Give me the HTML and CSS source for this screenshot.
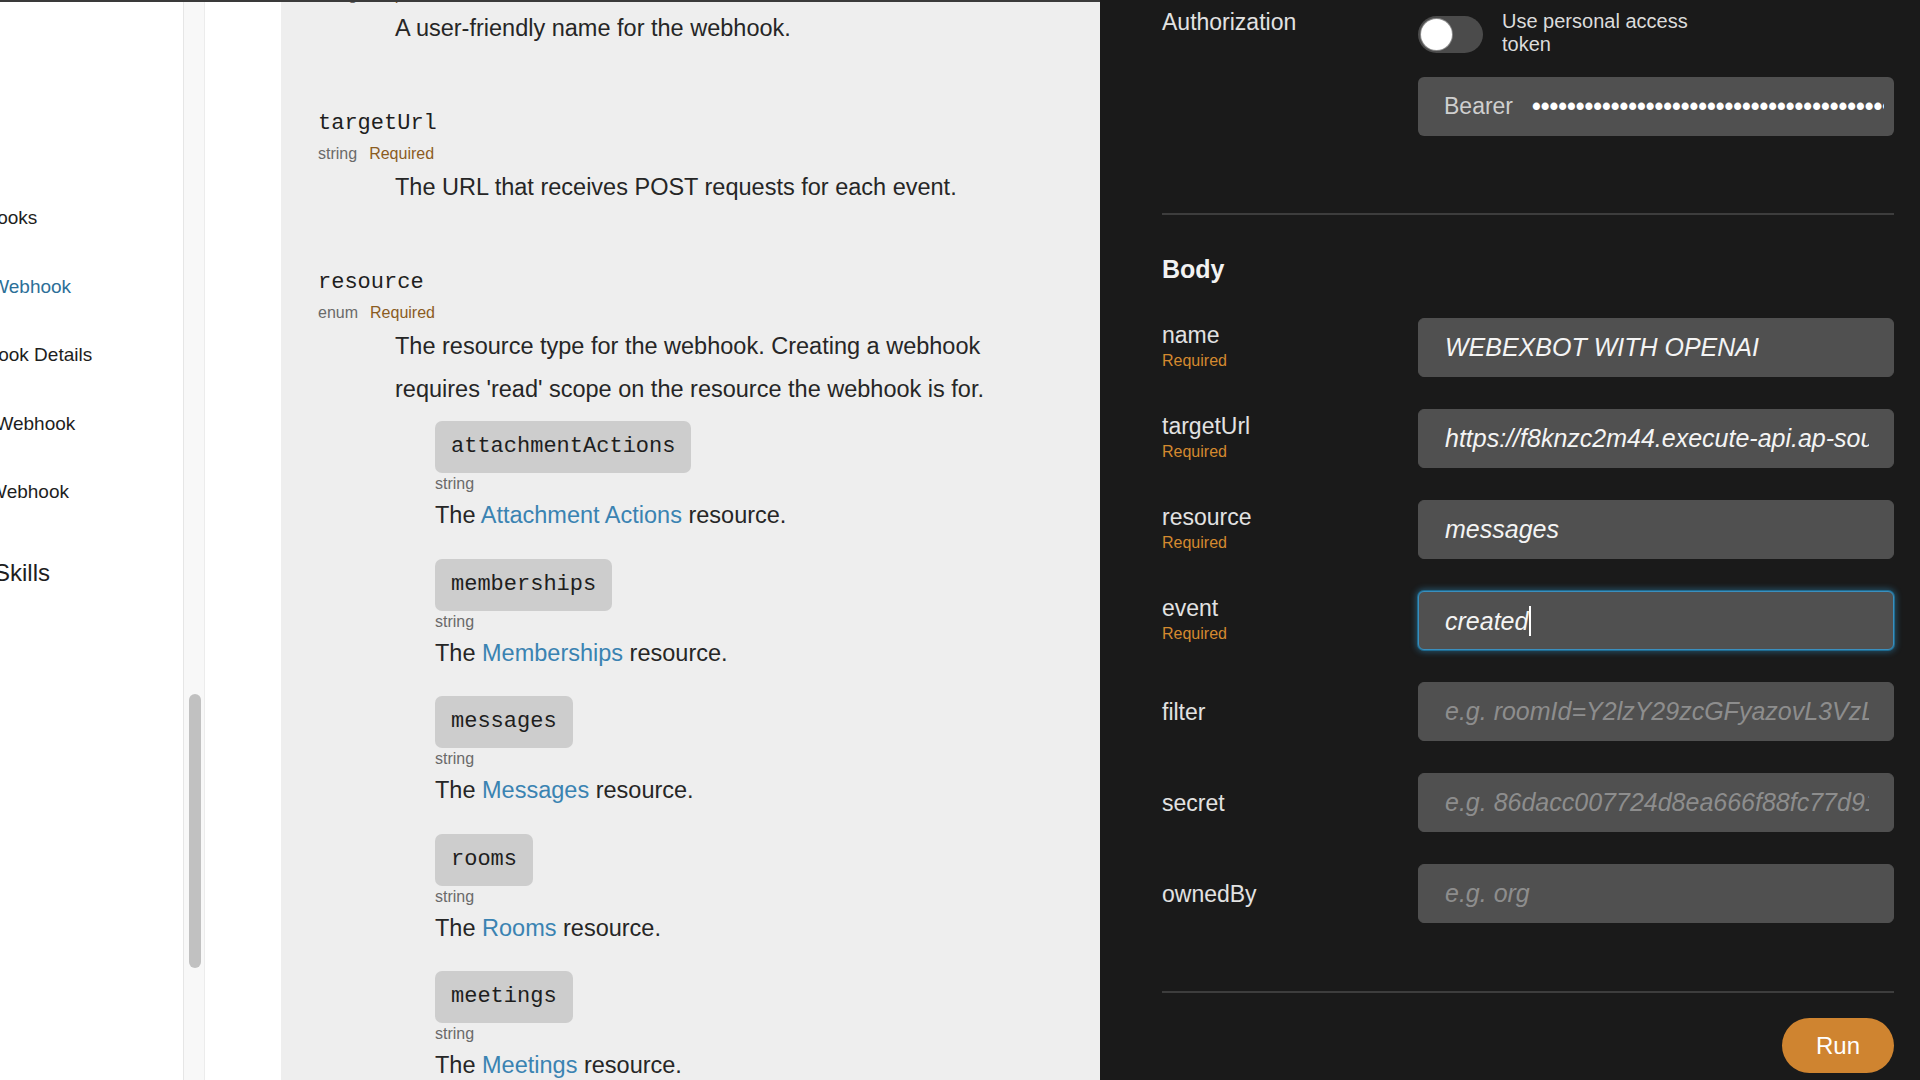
FILE: index.html
```html
<!DOCTYPE html>
<html lang="en">
<head>
<meta charset="utf-8">
<title>Create a Webhook</title>
<link rel="stylesheet" href="styles.css">
</head>
<body>
<div class="page">
  <div class="light">
    <nav class="sidebar">
      <ul class="nav-list">
        <li>List Webhooks</li>
        <li class="active">Create a Webhook</li>
        <li>Get Webhook Details</li>
        <li>Update a Webhook</li>
        <li>Delete a Webhook</li>
      </ul>
      <div class="nav-section">Skills</div>
    </nav>
    <div class="track"><div class="thumb"></div></div>
    <div class="gutter"></div>
    <main class="docs">
      <div class="param param--cut">
        <div class="meta"><span class="type">string</span><span class="req">Required</span></div>
        <p class="desc">A user-friendly name for the webhook.</p>
      </div>
      <div class="param">
        <div class="pname">targetUrl</div>
        <div class="meta"><span class="type">string</span><span class="req">Required</span></div>
        <p class="desc">The URL that receives POST requests for each event.</p>
      </div>
      <div class="param">
        <div class="pname">resource</div>
        <div class="meta"><span class="type">enum</span><span class="req">Required</span></div>
        <p class="desc">The resource type for the webhook. Creating a webhook requires 'read' scope on the resource the webhook is for.</p>
        <ul class="enum">
          <li class="enum-item">
            <code class="enum-code">attachmentActions</code>
            <div class="enum-type">string</div>
            <p class="enum-desc">The <a href="#">Attachment Actions</a> resource.</p>
          </li>
          <li class="enum-item">
            <code class="enum-code">memberships</code>
            <div class="enum-type">string</div>
            <p class="enum-desc">The <a href="#">Memberships</a> resource.</p>
          </li>
          <li class="enum-item">
            <code class="enum-code">messages</code>
            <div class="enum-type">string</div>
            <p class="enum-desc">The <a href="#">Messages</a> resource.</p>
          </li>
          <li class="enum-item">
            <code class="enum-code">rooms</code>
            <div class="enum-type">string</div>
            <p class="enum-desc">The <a href="#">Rooms</a> resource.</p>
          </li>
          <li class="enum-item">
            <code class="enum-code">meetings</code>
            <div class="enum-type">string</div>
            <p class="enum-desc">The <a href="#">Meetings</a> resource.</p>
          </li>
        </ul>
      </div>
    </main>
  </div>

  <section class="console">
    <div class="auth">
      <div class="label">Authorization</div>
      <div class="auth-body">
        <div class="toggle-row">
          <span class="toggle"><span class="knob"></span></span>
          <span class="toggle-text">Use personal access token</span>
        </div>
        <div class="bearer">
          <span class="bearer-label">Bearer</span>
          <span class="dots">••••••••••••••••••••••••••••••••••••••••••••••••••••••••••••</span>
        </div>
      </div>
    </div>
    <hr class="sep">
    <h2 class="body-title">Body</h2>
    <div class="fields">
      <div class="row">
        <div class="label-block"><div class="field-name">name</div><div class="field-req">Required</div></div>
        <div class="field"><span class="value">WEBEXBOT WITH OPENAI</span></div>
      </div>
      <div class="row">
        <div class="label-block"><div class="field-name">targetUrl</div><div class="field-req">Required</div></div>
        <div class="field"><span class="value">https://f8knzc2m44.execute-api.ap-southeast-1.amazonaws.com/prod/webhook</span></div>
      </div>
      <div class="row">
        <div class="label-block"><div class="field-name">resource</div><div class="field-req">Required</div></div>
        <div class="field"><span class="value">messages</span></div>
      </div>
      <div class="row">
        <div class="label-block"><div class="field-name">event</div><div class="field-req">Required</div></div>
        <div class="field field--focus"><span class="value">created<span class="caret"></span></span></div>
      </div>
      <div class="row">
        <div class="label-block"><div class="field-name">filter</div></div>
        <div class="field"><span class="value placeholder">e.g. roomId=Y2lzY29zcGFyazovL3VzL1JPT00vYmJjZWIxYWQtNDNmMS0zYjU4</span></div>
      </div>
      <div class="row">
        <div class="label-block"><div class="field-name">secret</div></div>
        <div class="field"><span class="value placeholder">e.g. 86dacc007724d8ea666f88fc77d918dad9537a15</span></div>
      </div>
      <div class="row">
        <div class="label-block"><div class="field-name">ownedBy</div></div>
        <div class="field"><span class="value placeholder">e.g. org</span></div>
      </div>
    </div>
    <hr class="sep sep--bottom">
    <div class="actions"><button class="run" type="button">Run</button></div>
  </section>
</div>
</body>
</html>
```

FILE: styles.css
```css
* { box-sizing: border-box; }

html, body {
  margin: 0;
  padding: 0;
  width: 1920px;
  height: 1080px;
  overflow: hidden;
}

body {
  font-family: "Liberation Sans", Arial, sans-serif;
  color: #222;
  background: #1a1a1a;
}

.page {
  display: flex;
  width: 1920px;
  height: 1080px;
}

/* ---------- light (docs) side ---------- */
.light {
  display: flex;
  width: 1100px;
  height: 1080px;
  border-top: 2px solid #3a3a3a;
  background: #fff;
  overflow: hidden;
}

.sidebar {
  width: 183px;
  flex: none;
  overflow: hidden;
  white-space: nowrap;
  background: #fff;
}

.nav-list {
  list-style: none;
  margin: 0 0 0 -87px;
  padding: 182px 0 0;
}

.nav-list li {
  font-size: 19px;
  line-height: 68.5px;
  height: 68.5px;
  color: #1e1e1e;
}

.nav-list li.active { color: #2c6f98; }

.nav-section {
  margin: 26px 0 0 -6px;
  font-size: 24px;
  line-height: 40px;
  color: #1e1e1e;
}

.track {
  width: 22px;
  flex: none;
  background: #f8f8f8;
  border-left: 1px solid #e6e6e6;
  border-right: 1px solid #ececec;
  padding-left: 5px;
}

.thumb {
  width: 12px;
  height: 274px;
  margin-top: 692px;
  border-radius: 6px;
  background: #c1c1c1;
}

.gutter {
  width: 76px;
  flex: none;
  background: #fff;
}

.docs {
  width: 819px;
  flex: none;
  background: #eeeeee;
  padding-left: 37px;
  overflow: hidden;
}

.param { margin-bottom: 55px; }
.param--cut { margin-top: -19px; }

.pname {
  padding-top: 3px;
  font-family: "Liberation Mono", "Courier New", monospace;
  font-size: 22px;
  line-height: 32px;
  color: #1e1e1e;
}

.meta {
  margin-top: 2px;
  font-size: 16px;
  line-height: 24px;
  white-space: nowrap;
}
.param--cut .meta { margin-top: 0; }

.type { color: #6a6a6a; }
.req { color: #8b5c1f; margin-left: 12px; }

.desc {
  margin: 0;
  padding-left: 77px;
  max-width: 720px;
  font-size: 23.5px;
  line-height: 43px;
  color: #262626;
}

.enum {
  list-style: none;
  margin: 10px 0 0;
  padding: 0 0 0 117px;
}

.enum-item { margin-bottom: 23.5px; }

.enum-code {
  display: inline-block;
  height: 52px;
  padding: 0 16px;
  border-radius: 7px;
  background: #cdcdcd;
  font-family: "Liberation Mono", "Courier New", monospace;
  font-size: 22px;
  line-height: 52px;
  color: #1e1e1e;
}

.enum-type {
  font-size: 16px;
  line-height: 22px;
  color: #6a6a6a;
}

.enum-desc {
  margin: 0;
  font-size: 23.5px;
  line-height: 40px;
  color: #262626;
}

.enum-desc a {
  color: #3a83b2;
  text-decoration: none;
}

/* ---------- console (dark) side ---------- */
.console {
  width: 820px;
  flex: none;
  height: 1080px;
  background: #1a1a1a;
  padding: 0 26px 0 62px;
  color: #e2e2e2;
}

.auth {
  display: grid;
  grid-template-columns: 256px minmax(0, 1fr);
}

.auth-body { min-width: 0; }

.label {
  margin-top: 8px;
  font-size: 23px;
  line-height: 28px;
  color: #e2e2e2;
}

.toggle-row {
  display: flex;
  align-items: flex-start;
  padding-top: 10px;
}

.toggle {
  flex: none;
  width: 65px;
  height: 37px;
  margin-top: 6px;
  border-radius: 19px;
  background: #4b4b4b;
  padding: 3px 0 0 3px;
}

.knob {
  display: block;
  width: 31px;
  height: 31px;
  border-radius: 50%;
  background: #fff;
  box-shadow: 0 0 0 1px #8a8a8a;
}

.toggle-text {
  width: 200px;
  margin-left: 19px;
  font-size: 20px;
  line-height: 23px;
  color: #dcdcdc;
}

.bearer {
  display: flex;
  align-items: center;
  height: 59px;
  margin-top: 21px;
  padding: 0 10px 0 26px;
  border-radius: 6px;
  background: #505050;
  overflow: hidden;
  white-space: nowrap;
}

.bearer-label {
  flex: none;
  font-size: 23px;
  color: #cfcfcf;
}

.dots {
  flex: 1;
  min-width: 0;
  overflow: hidden;
  margin-left: 19px;
  font-size: 25px;
  font-weight: 700;
  color: #ffffff;
}

.sep {
  height: 2px;
  margin: 77px 0 0;
  border: 0;
  background: #3d3d3d;
}

.body-title {
  margin: 39px 0 0;
  font-size: 25px;
  line-height: 30px;
  font-weight: 700;
  color: #f2f2f2;
}

.fields {
  display: flex;
  flex-direction: column;
  gap: 32px;
  margin-top: 34px;
}

.row {
  display: grid;
  grid-template-columns: 256px minmax(0, 1fr);
  align-items: center;
}

.field-name {
  font-size: 23px;
  line-height: 26px;
  color: #e2e2e2;
}

.field-req {
  font-size: 16px;
  line-height: 26px;
  color: #d4892f;
}

.field {
  display: flex;
  align-items: center;
  height: 59px;
  padding: 0 24px 0 26px;
  border: 1px solid #505050;
  border-radius: 6px;
  background: #505050;
  overflow: hidden;
}

.field--focus {
  border-color: #3a8fbe;
  box-shadow: 0 0 0 1px #1e6a8f, 0 0 6px 2px rgba(52, 150, 205, 0.45);
}

.value {
  flex: 1;
  min-width: 0;
  overflow: hidden;
  white-space: nowrap;
  font-size: 25px;
  font-style: italic;
  color: #f4f4f4;
}

.value.placeholder { color: #8d8d8d; }

.caret {
  display: inline-block;
  width: 2px;
  height: 30px;
  margin-left: 1px;
  vertical-align: -6px;
  background: #ffffff;
}

.sep--bottom { margin-top: 68px; }

.actions {
  display: flex;
  justify-content: flex-end;
  margin-top: 25px;
}

.run {
  width: 112px;
  height: 55px;
  border: 0;
  border-radius: 28px;
  background: #cf8430;
  color: #fff;
  font-family: "Liberation Sans", Arial, sans-serif;
  font-size: 24px;
  cursor: pointer;
}
```
